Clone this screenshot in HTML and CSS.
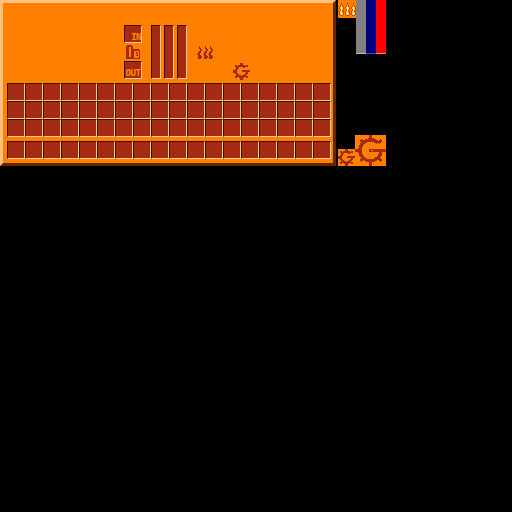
FILE: index.html
```html
<!DOCTYPE html>
<html lang="en">
<head>
    <meta charset="UTF-8">
    <title>Furnace sprite sheet</title>
    <link rel="stylesheet" href="styles.css">
</head>
<body>
    <svg class="defs" width="0" height="0">
        <symbol id="gear" viewBox="0 0 31 31">
            <path d="M14 0h3v4h-3zM14 27h3v4h-3zM0 14h4v3H0zM4 6l2-2 3 3-2 2zM27 6l-2-2-3 3 2 2zM4 25l2 2 3-3-2-2zM27 25l-2 2-3-3 2-2z"/>
            <path d="M23 8A10.5 10.5 0 1 0 26 15.5" fill="none" stroke="currentColor" stroke-width="3.5"/>
            <path d="M14 14h17v3H14z"/>
            <path class="gear-hole" d="M16 15h2v1h-2z"/>
        </symbol>
        <symbol id="gear-small" viewBox="0 0 17 17">
            <path d="M7 0h3v2H7zM7 15h3v2H7zM0 7h2v3H0zM2 2h2v2H2zM13 2h2v2h-2zM2 13h2v2H2zM13 13h2v2h-2z"/>
            <path d="M12.5 4.5A5.5 5.5 0 1 0 14 8.5" fill="none" stroke="currentColor" stroke-width="2.4"/>
            <path d="M9 7h8v2H9z"/>
        </symbol>
        <path id="flame" d="M2 0h1v2h1v1h1v2H4v2H3v2h1v1h1v2H4v1H1V9H0V8h1V6h1V5h1V3H2z"/>
        <g id="flame-hot">
            <path class="hot-red" d="M2 0h1v2h1v2h1v3H4v1h1v4H4v1H1v-1H0V8h1V6H0V4h1V2h1z"/>
            <path class="hot-yellow" d="M2 2h1v2h1v3H3v2h1v3H1V8h1V6H1V4h1z"/>
            <path class="hot-white" d="M2 4h1v4H2zM2 9h1v3H2z"/>
        </g>
    </svg>

    <div class="sheet">
        <div class="panel">
            <div class="machine">
                <div class="slot-col">
                    <div class="cell slot slot-in">IN</div>
                    <svg class="count" viewBox="0 0 14 16" width="14" height="16">
                        <path class="count-fill" d="M1 1h5v1h1v3h6v1h1v9H0V2h1z"/>
                        <path class="count-hole" d="M3 3h2v10H3zM8 7h5v7H8z"/>
                        <path class="count-fill" d="M10 8h2v1h-1v1h1v2h-2v-1h1v-1h-1z"/>
                    </svg>
                    <div class="cell slot slot-out">OUT</div>
                </div>
                <div class="bars">
                    <div class="cell bar"></div>
                    <div class="cell bar"></div>
                    <div class="cell bar"></div>
                </div>
                <svg class="flames-dark" viewBox="0 0 16 13">
                    <use href="#flame"/>
                    <use href="#flame" x="6"/>
                    <use href="#flame" x="11"/>
                </svg>
                <svg class="gear-art gear-dark"><use href="#gear-small"/></svg>
            </div>

            <div class="slots" id="slots-main"></div>
            <div class="slots" id="slots-hotbar"></div>
        </div>

        <div class="side">
            <div class="side-top">
                <div class="flame-tile">
                    <svg viewBox="0 0 18 18" width="18" height="18">
                        <use href="#flame-hot" x="1" y="3"/>
                        <use href="#flame-hot" x="7" y="3"/>
                        <use href="#flame-hot" x="13" y="3"/>
                    </svg>
                </div>
                <div class="meter meter-gray"></div>
                <div class="meter meter-blue"></div>
                <div class="meter meter-red"></div>
            </div>
            <div class="side-bottom">
                <div class="gear-tile gear-small"><svg class="gear-art"><use href="#gear-small"/></svg></div>
                <div class="gear-tile gear-big"><svg class="gear-art"><use href="#gear"/></svg></div>
            </div>
        </div>
    </div>

    <script>
        // Inventory slots
        function fillSlots(id, count) {
            const box = document.getElementById(id);
            for (let i = 0; i < count; i++) {
                const cell = document.createElement('div');
                cell.className = 'cell';
                box.appendChild(cell);
            }
        }

        fillSlots('slots-main', 54);
        fillSlots('slots-hotbar', 18);
    </script>
</body>
</html>
```

FILE: styles.css
```css
body {
    margin: 0;
    background: #000000;
    font-family: "DejaVu Sans Mono", monospace;
}

svg {
    display: block;
    shape-rendering: crispEdges;
}

.defs {
    position: absolute;
}

.sheet {
    display: flex;
    align-items: flex-start;
}

.panel {
    box-sizing: border-box;
    width: 336px;
    height: 166px;
    padding: 22px 2px 4px 4px;
    background: #ff8000;
    border-style: solid;
    border-width: 3px;
    border-color: #ffc080 #602800 #602800 #ffc080;
}

.machine {
    display: flex;
    height: 54px;
    padding-left: 117px;
    color: #a52a14;
}

.cell {
    box-sizing: border-box;
    background: #a52a14;
    border-style: solid;
    border-width: 1px;
    border-color: #3c1000 #ffc890 #ffc890 #3c1000;
}

.slot-col {
    display: flex;
    flex-direction: column;
    align-items: center;
    justify-content: space-between;
    width: 18px;
}

.slot {
    display: flex;
    align-items: flex-end;
    justify-content: flex-end;
    width: 18px;
    height: 18px;
    color: #ff8c00;
    font-size: 9px;
    font-weight: bold;
    line-height: 9px;
    letter-spacing: -0.5px;
}

.slot-out {
    justify-content: center;
}

.count-fill {
    fill: #a52a14;
}

.count-hole {
    fill: #ff8000;
}

.bars {
    display: flex;
    gap: 3px;
    margin-left: 9px;
}

.bar {
    width: 10px;
    height: 54px;
}

.flames-dark {
    width: 16px;
    height: 13px;
    margin: 21px 0 0 10px;
    fill: #a52a14;
}

.gear-art {
    fill: currentColor;
}

.gear-hole {
    fill: #ff8000;
}

.gear-dark {
    width: 17px;
    height: 17px;
    margin: 38px 0 0 20px;
}

.slots {
    display: grid;
    grid-template-columns: repeat(18, 18px);
    grid-auto-rows: 18px;
    margin-top: 4px;
}

.side {
    display: flex;
    flex-direction: column;
    justify-content: space-between;
    width: 48px;
    height: 166px;
    margin-left: 2px;
}

.side-top {
    display: flex;
    align-items: flex-start;
}

.flame-tile {
    width: 18px;
    height: 18px;
    background: #ff8000;
}

.hot-red {
    fill: #d84000;
}

.hot-yellow {
    fill: #ffd000;
}

.hot-white {
    fill: #ffffff;
}

.meter {
    box-sizing: border-box;
    width: 10px;
    height: 54px;
    border-bottom: 1px solid;
}

.meter-gray {
    background: #808080;
    border-color: #c0c0c0;
}

.meter-blue {
    background: #000080;
    border-color: #4040ff;
}

.meter-red {
    background: #ff0000;
    border-color: #ff8060;
}

.side-bottom {
    display: flex;
    align-items: flex-end;
}

.gear-tile {
    background: #ff8000;
    color: #a52a14;
}

.gear-tile svg {
    width: 100%;
    height: 100%;
}

.gear-small {
    width: 17px;
    height: 17px;
}

.gear-big {
    width: 31px;
    height: 31px;
}
```
